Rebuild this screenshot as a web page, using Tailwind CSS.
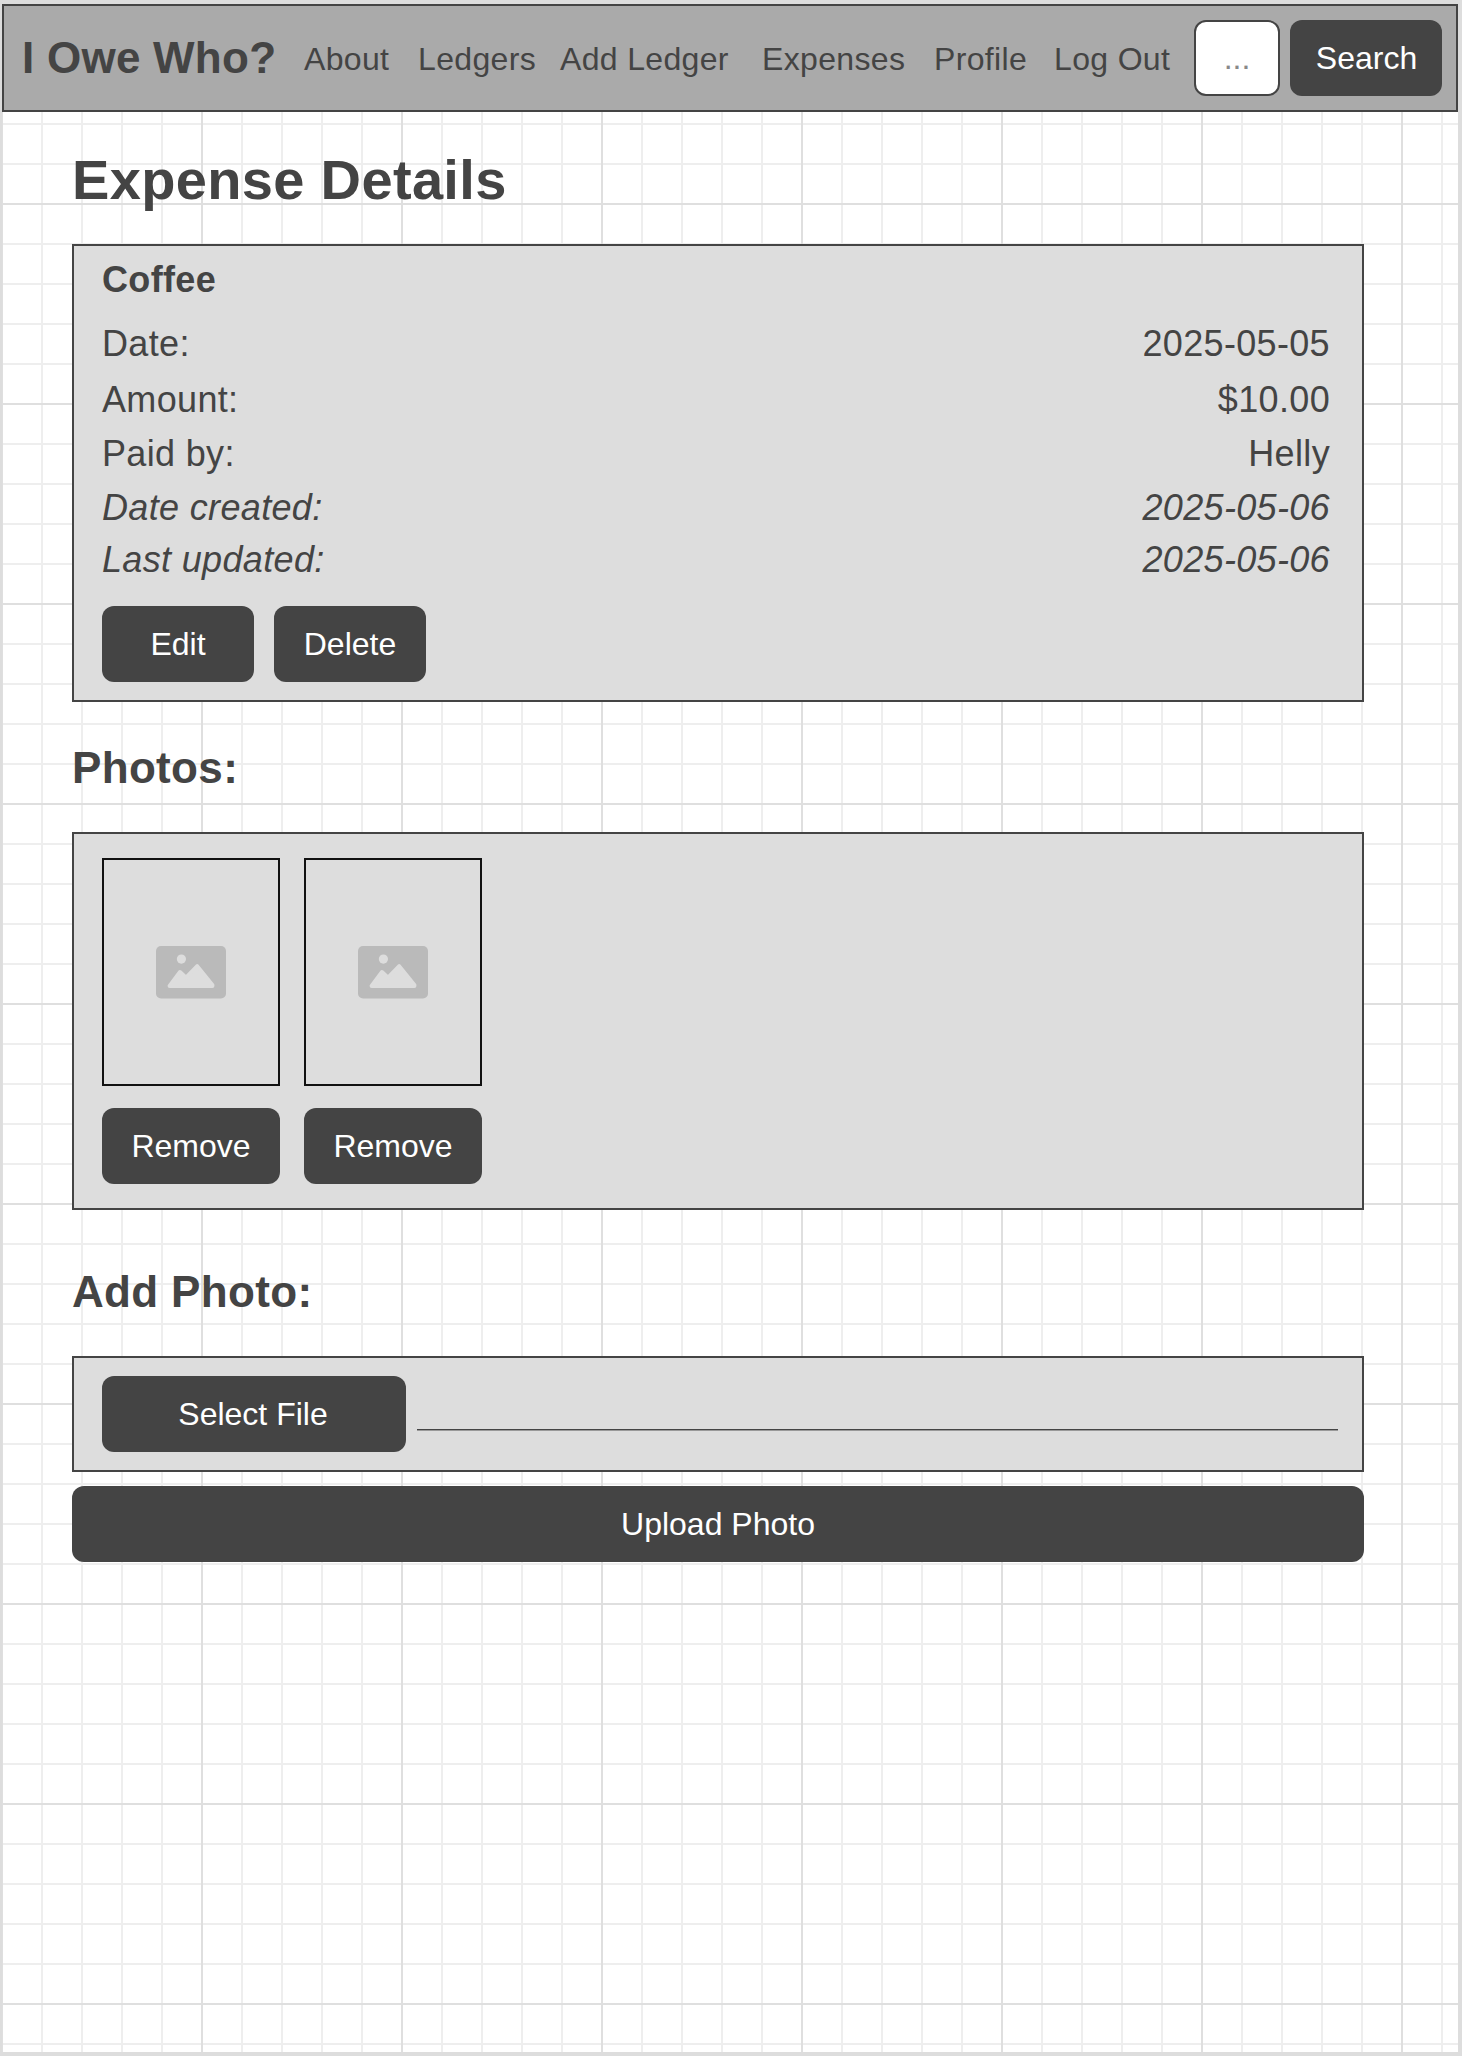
<!DOCTYPE html>
<html lang="en">
<head>
<meta charset="utf-8">
<title>I Owe Who? - Expense Details</title>
<script src="https://cdn.jsdelivr.net/npm/@tailwindcss/browser@4"></script>
</head>
<body class="bg-[#ddd] pt-1 pl-0.5 pr-1 h-[2056px] overflow-hidden font-['Liberation_Sans',Arial,sans-serif] text-[#444] tracking-[0.34px]">
<svg class="hidden" aria-hidden="true">
  <symbol id="picture" viewBox="0 0 70 53">
    <rect x="0" y="0" width="70" height="52.4" rx="5" fill="#bababa"/>
    <circle cx="25.4" cy="13.1" r="4.6" fill="#ddd"/>
    <path d="M13.6 40 L24 26 L30 31.6 L41.2 20.2 L56.4 39 V40 Z" fill="#ddd" stroke="#ddd" stroke-width="4" stroke-linejoin="round"/>
  </symbol>
</svg>

<!-- Ruled sheet: fine lines every 40px, heavier lines every 200px -->
<div class="h-[2048px] bg-white bg-[linear-gradient(#dfdfdf_2px,transparent_2px),linear-gradient(90deg,#dfdfdf_2px,transparent_2px),linear-gradient(#eee_2px,transparent_2px),linear-gradient(90deg,#eee_2px,transparent_2px)] bg-size-[200px_200px,200px_200px,40px_40px,40px_40px] bg-position-[0px_-1px,-1px_0px,0px_-1px,-1px_0px]">

  <header class="flex items-start h-[108px] border-2 border-[#444] bg-[#aaa] pl-[18px] pr-3.5 pt-3.5">
    <h1 class="w-[282px] pt-[13px] text-[44px] leading-[49px] font-bold whitespace-nowrap tracking-[0.25px]">I Owe Who?</h1>
    <nav class="flex pt-[21px] text-[32px] leading-[36px] whitespace-nowrap">
      <a class="w-[114px]">About</a>
      <a class="w-[142px]">Ledgers</a>
      <a class="w-[202px]">Add Ledger</a>
      <a class="w-[172px]">Expenses</a>
      <a class="w-[120px]">Profile</a>
      <a class="w-[140px]">Log Out</a>
    </nav>
    <div class="w-[86px] h-[76px] border-2 border-[#444] rounded-xl bg-white text-[#888] text-[32px] leading-[36px] tracking-normal text-center pt-[18px]">...</div>
    <button class="ml-2.5 w-[152px] h-[76px] rounded-xl bg-[#444] text-white text-[32px] leading-[36px] tracking-normal pl-px">Search</button>
  </header>

  <main class="pl-[70px] pr-[94px] pt-9">
    <h2 class="text-[56px] leading-[63px] font-bold">Expense Details</h2>

    <section class="mt-[33px] h-[458px] border-2 border-[#444] bg-[#ddd] pl-7 pr-8 pt-[13px] text-[36px] leading-[41px]">
      <h3 class="font-bold">Coffee</h3>
      <div class="mt-[23px] flex justify-between"><span>Date:</span><span>2025-05-05</span></div>
      <div class="mt-[15px] flex justify-between"><span>Amount:</span><span>$10.00</span></div>
      <div class="mt-[13px] flex justify-between"><span>Paid by:</span><span>Helly</span></div>
      <div class="mt-[13px] flex justify-between italic"><span>Date created:</span><span>2025-05-06</span></div>
      <div class="mt-[11px] flex justify-between italic"><span>Last updated:</span><span>2025-05-06</span></div>
      <div class="mt-[26px] flex gap-5 text-[32px] leading-[36px] tracking-normal text-white">
        <button class="w-[152px] h-[76px] rounded-xl bg-[#444]">Edit</button>
        <button class="w-[152px] h-[76px] rounded-xl bg-[#444]">Delete</button>
      </div>
    </section>

    <h2 class="mt-[41px] text-[44px] leading-[49px] font-bold">Photos:</h2>
    <section class="mt-10 h-[378px] border-2 border-[#444] bg-[#ddd] pl-7 pt-6 flex gap-6 text-[32px] leading-[36px] tracking-normal">
      <div class="w-[178px] flex flex-col gap-[22px]">
        <div class="h-[228px] border-2 border-[#111] flex items-center justify-center"><svg class="w-[70px] h-[53px]"><use href="#picture"/></svg></div>
        <button class="h-[76px] rounded-xl bg-[#444] text-white">Remove</button>
      </div>
      <div class="w-[178px] flex flex-col gap-[22px]">
        <div class="h-[228px] border-2 border-[#111] flex items-center justify-center"><svg class="w-[70px] h-[53px]"><use href="#picture"/></svg></div>
        <button class="h-[76px] rounded-xl bg-[#444] text-white">Remove</button>
      </div>
    </section>

    <h2 class="mt-[57px] text-[44px] leading-[49px] font-bold">Add Photo:</h2>
    <section class="mt-10 h-[116px] border-2 border-[#444] bg-[#ddd] pl-7 pr-6 pt-[18px] flex gap-[11px]">
      <button class="w-[304px] h-[76px] rounded-xl bg-[#444] text-white text-[32px] leading-[36px] tracking-normal pr-0.5">Select File</button>
      <div class="flex-1 h-[55px] border-b border-[#999]"><div class="h-full border-b border-[#444]"></div></div>
    </section>
    <button class="mt-3.5 block w-full h-[76px] rounded-xl bg-[#444] text-white text-[32px] leading-[36px] tracking-normal">Upload Photo</button>
  </main>
</div>
</body>
</html>
